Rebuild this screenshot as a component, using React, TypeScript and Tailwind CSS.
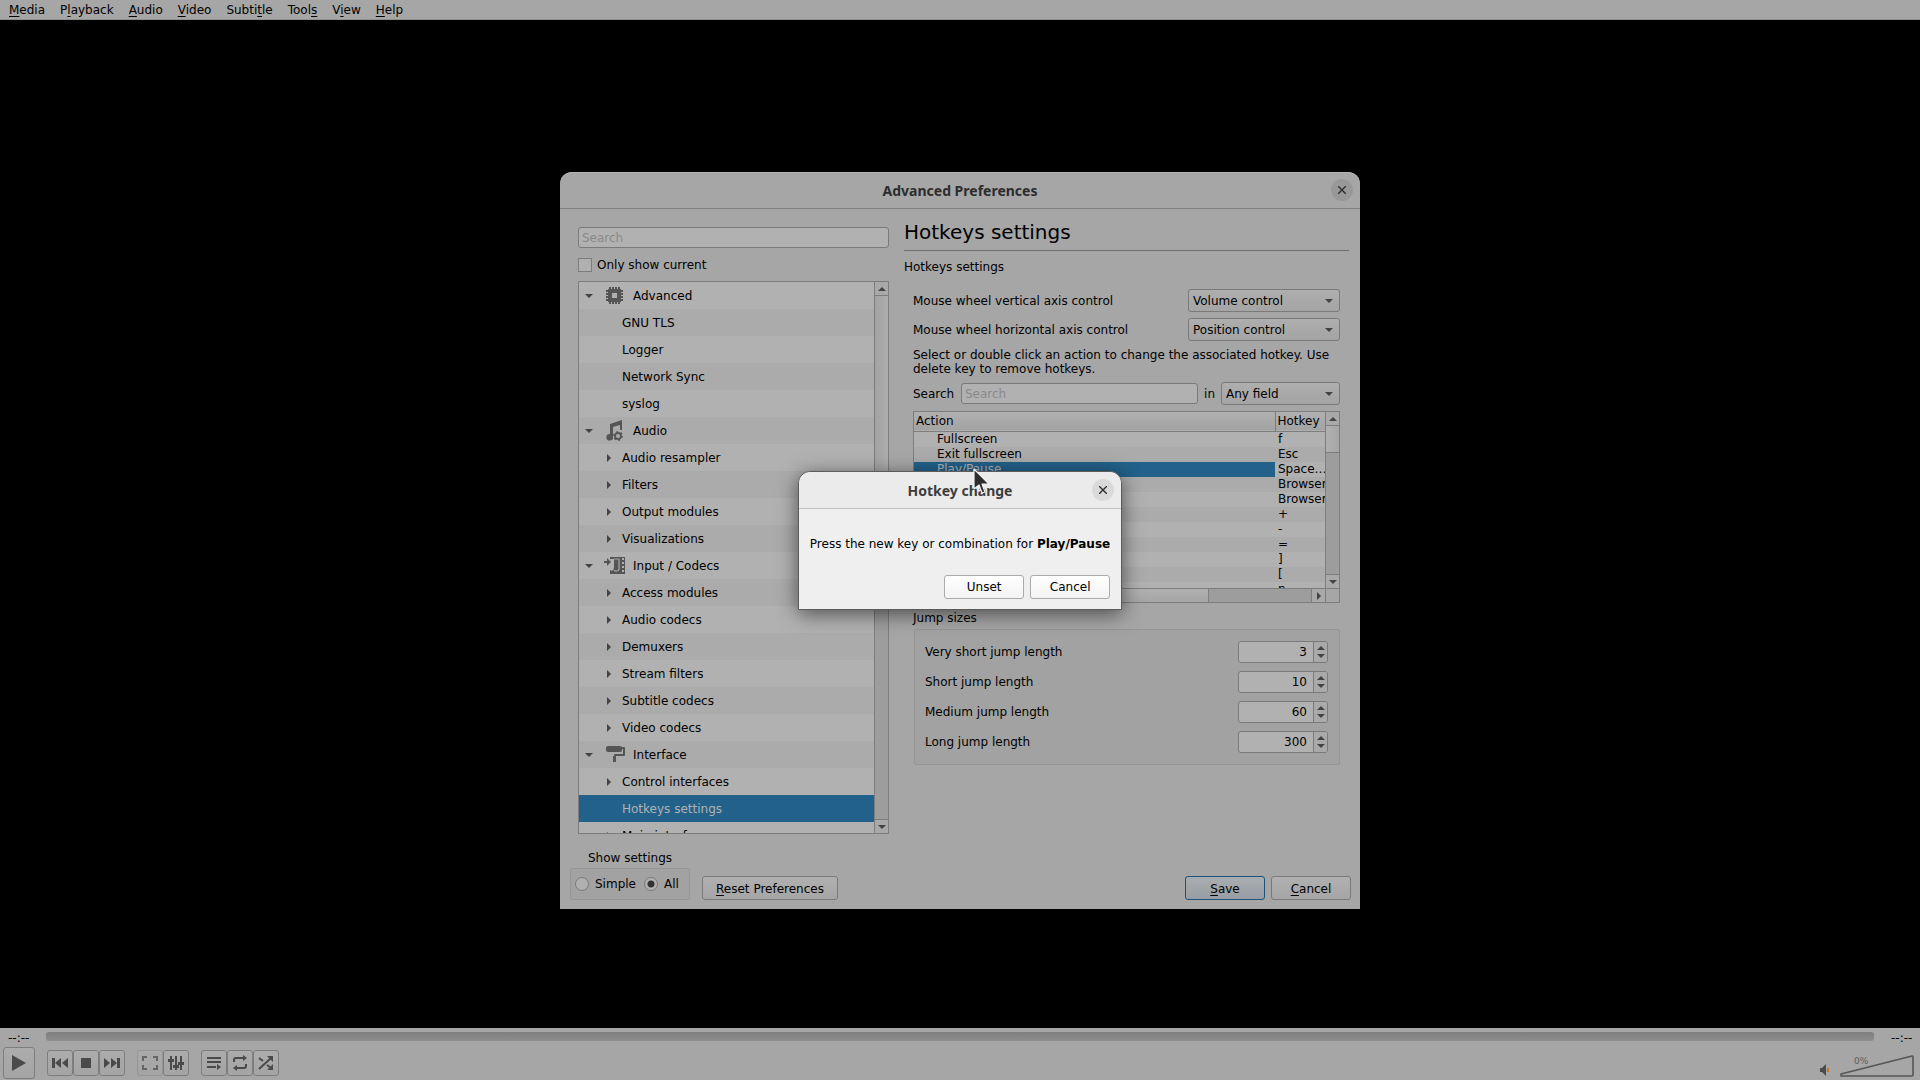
import { useState } from "react"
import type { ReactNode } from "react"

type TreeItem = { label: string; level: 0 | 1; closed?: boolean; icon?: ReactNode; selected?: boolean }

function ChipIcon() {
  return (
    <svg width="22" height="22" viewBox="0 0 22 22" fill="#555" className="shrink-0">
      <path d="M4 4h13v13H4z M8 8v5h5V8z" fillRule="evenodd" />
      <path d="M5 2h2v2H5z M8 2h2v2H8z M11 2h2v2h-2z M14 2h2v2h-2z M5 17h2v2H5z M8 17h2v2H8z M11 17h2v2h-2z M14 17h2v2h-2z" />
      <path d="M2 5h2v2H2z M2 8h2v2H2z M2 11h2v2H2z M2 14h2v2H2z M17 5h2v2h-2z M17 8h2v2h-2z M17 11h2v2h-2z M17 14h2v2h-2z" />
    </svg>
  )
}

function NoteIcon() {
  return (
    <svg width="22" height="22" viewBox="0 0 22 22" className="shrink-0 overflow-visible">
      <path d="M6 4L18 0v10h-2V5L9 7v10a3.3 3.3 0 1 1-3-3z" fill="#555" />
      <circle cx="14" cy="16" r="3" fill="none" stroke="#555" strokeWidth="1.8" />
      <circle cx="14" cy="16" r="4.2" fill="none" stroke="#555" strokeWidth="1.4" strokeDasharray="1.8 2.6" />
    </svg>
  )
}

function CodecIcon() {
  return (
    <svg width="22" height="22" viewBox="0 0 22 22" className="shrink-0 overflow-visible">
      <path d="M0 6h3V3l4 4-4 4V8H0z" fill="#555" />
      <path d="M6 2h15v17H6v-4c3 2 4-1 4-3V4H6z" fill="#555" />
      <path d="M10 4h5v10c0 2-4 3-5 1" fill="none" stroke="#a9a9a9" strokeWidth="1.2" />
      <path d="M18 3h2v2h-2z M18 7h2v2h-2z M18 11h2v2h-2z M18 15h2v2h-2z" fill="#b0b0b0" />
    </svg>
  )
}

function RollerIcon() {
  return (
    <svg width="22" height="22" viewBox="0 0 22 22" className="shrink-0 overflow-visible">
      <rect x="2" y="2" width="16" height="6" rx="2" fill="#555" />
      <path d="M17 4h3v7h-9v6" fill="none" stroke="#555" strokeWidth="2" strokeLinejoin="round" strokeLinecap="round" />
      <path d="M9 12h3v6H9z" fill="#555" />
    </svg>
  )
}

const tree: TreeItem[] = [
  { label: "Advanced", level: 0, icon: <ChipIcon /> },
  { label: "GNU TLS", level: 1 },
  { label: "Logger", level: 1 },
  { label: "Network Sync", level: 1 },
  { label: "syslog", level: 1 },
  { label: "Audio", level: 0, icon: <NoteIcon /> },
  { label: "Audio resampler", level: 1, closed: true },
  { label: "Filters", level: 1, closed: true },
  { label: "Output modules", level: 1, closed: true },
  { label: "Visualizations", level: 1, closed: true },
  { label: "Input / Codecs", level: 0, icon: <CodecIcon /> },
  { label: "Access modules", level: 1, closed: true },
  { label: "Audio codecs", level: 1, closed: true },
  { label: "Demuxers", level: 1, closed: true },
  { label: "Stream filters", level: 1, closed: true },
  { label: "Subtitle codecs", level: 1, closed: true },
  { label: "Video codecs", level: 1, closed: true },
  { label: "Interface", level: 0, icon: <RollerIcon /> },
  { label: "Control interfaces", level: 1, closed: true },
  { label: "Hotkeys settings", level: 1, selected: true },
  { label: "Main interfaces", level: 1, closed: true },
]

const hotkeys = [
  ["Fullscreen", "f"],
  ["Exit fullscreen", "Esc"],
  ["Play/Pause", "Space…"],
  ["Pause only", "Browser"],
  ["Play only", "Browser"],
  ["Faster", "+"],
  ["Slower", "-"],
  ["Normal rate", "="],
  ["Faster (fine)", "]"],
  ["Slower (fine)", "["],
  ["Next", "n"],
]

const jumps = [
  { id: "very-short", label: "Very short jump length", value: 3 },
  { id: "short", label: "Short jump length", value: 10 },
  { id: "medium", label: "Medium jump length", value: 60 },
  { id: "long", label: "Long jump length", value: 300 },
]

// [before, mnemonic, after]
const menus = [
  ["", "M", "edia"],
  ["P", "l", "ayback"],
  ["", "A", "udio"],
  ["", "V", "ideo"],
  ["Subti", "t", "le"],
  ["Tool", "s", ""],
  ["V", "i", "ew"],
  ["", "H", "elp"],
]

function Mnemonic({ parts }: { parts: string[] }) {
  return (
    <span>
      {parts[0]}
      <span className="underline underline-offset-2">{parts[1]}</span>
      {parts[2]}
    </span>
  )
}

function Arrow({ dir }: { dir: "up" | "down" | "right" }) {
  const d = { up: "M0 6L4 2L8 6z", down: "M0 2L4 6L8 2z", right: "M2 0L6 4L2 8z" }[dir]
  return (
    <svg width="8" height="8" viewBox="0 0 8 8" fill="#434343" className="shrink-0">
      <path d={d} />
    </svg>
  )
}

function CloseButton({ className }: { className: string }) {
  return (
    <button aria-label="Close" className={`flex size-[22px] items-center justify-center rounded-full ${className}`}>
      <svg width="8" height="8" viewBox="0 0 8 8" stroke="#303030" strokeWidth="1.4">
        <path d="M0 0L8 8M8 0L0 8" />
      </svg>
    </button>
  )
}

function TitleBar({ title, className, closeClass }: { title: string; className: string; closeClass: string }) {
  return (
    <div className={`grid h-[37px] grid-cols-[1fr_auto_1fr] items-center border-b px-[7px] ${className}`}>
      <span />
      <h1 className="pt-0.5 font-['Noto_Sans',sans-serif] text-sm font-bold">{title}</h1>
      <div className="flex justify-end">
        <CloseButton className={closeClass} />
      </div>
    </div>
  )
}

function Select({ id, value, className }: { id: string; value: string; className: string }) {
  return (
    <div className={`relative h-[23px] ${className}`}>
      <select
        id={id}
        className="h-full w-full appearance-none rounded-[3px] border border-[#7a7a7a] bg-linear-to-b from-[#aeaeae] to-[#a4a4a4] pl-1 text-xs"
      >
        <option>{value}</option>
      </select>
      <span className="pointer-events-none absolute inset-y-0 right-[7px] flex items-center">
        <Arrow dir="down" />
      </span>
    </div>
  )
}

const pushButton = "h-6 rounded-[3px] border text-center"
const greyButton = "border-[#797979] bg-linear-to-b from-[#b0b0b0] to-[#a5a5a5]"

function Tree() {
  return (
    <div className="mt-2 flex h-[553px] border border-[#7d7d7d]">
      <ul className="min-w-0 flex-1 overflow-hidden bg-[#b1b1b1]">
        {tree.map((item) => (
          <li
            key={item.label}
            className={`flex h-[27px] items-center ${item.selected ? "bg-[#22618a] text-[#b2b2b2]" : "even:bg-[#ababab]"}`}
          >
            {item.level === 0 ? (
              <>
                <span className="flex w-[25px] pl-1.5">
                  <Arrow dir="down" />
                </span>
                {item.icon}
                <span className="pl-[7px]">{item.label}</span>
              </>
            ) : (
              <>
                <span className="flex w-[43px] pl-[26px]">{item.closed && <Arrow dir="right" />}</span>
                <span>{item.label}</span>
              </>
            )}
          </li>
        ))}
      </ul>
      <div className="flex w-[14px] flex-col border-l border-[#7d7d7d] bg-[#9d9d9d]">
        <span className="flex h-[14px] items-center justify-center border-b border-[#7d7d7d] bg-[#a9a9a9]">
          <Arrow dir="up" />
        </span>
        <span className="h-60 border-b border-[#7d7d7d] bg-linear-to-r from-[#a3a3a3] to-[#adadad]" />
        <span className="mt-auto flex h-[14px] items-center justify-center border-t border-[#7d7d7d] bg-[#a9a9a9]">
          <Arrow dir="down" />
        </span>
      </div>
    </div>
  )
}

function HotkeyTable() {
  return (
    <div className="mt-1.5 border border-[#7d7d7d]">
      <div className="flex h-[176px]">
        <div className="min-w-0 flex-1 overflow-hidden bg-[#b1b1b1]">
          <table className="w-full table-fixed border-collapse text-left">
            <thead>
              <tr className="h-[19px] border-b border-[#7d7d7d] bg-linear-to-b from-[#b0b0b0] to-[#a3a3a3] leading-[17px]">
                <th className="pt-px pl-0.5 font-normal">Action</th>
                <th className="w-[50px] border-l border-[#7d7d7d] pt-px pl-0.5 font-normal">Hotkey</th>
              </tr>
            </thead>
            <tbody>
              {hotkeys.map(([action, key], i) => (
                <tr key={action} className="h-[15px] leading-[15px] even:bg-[#ababab]">
                  <td className={i === 2 ? "bg-[#22618a] pl-[23px] text-[#b2b2b2]" : "pl-[23px]"}>{action}</td>
                  <td className="overflow-hidden pl-[3px] whitespace-nowrap">{key}</td>
                </tr>
              ))}
            </tbody>
          </table>
        </div>
        <div className="flex w-[14px] flex-col border-l border-[#7d7d7d] bg-[#9d9d9d]">
          <span className="flex h-[14px] items-center justify-center border-b border-[#7d7d7d] bg-[#a9a9a9]">
            <Arrow dir="up" />
          </span>
          <span className="h-[27px] border-b border-[#7d7d7d] bg-linear-to-r from-[#b0b0b0] to-[#a6a6a6]" />
          <span className="mt-auto flex h-[14px] items-center justify-center border-t border-[#7d7d7d] bg-[#a9a9a9]">
            <Arrow dir="down" />
          </span>
        </div>
      </div>
      <div className="flex h-[14px] border-t border-[#7d7d7d] bg-[#9d9d9d]">
        <span className="w-[14px] border-r border-[#7d7d7d] bg-[#a9a9a9]" />
        <span className="w-[281px] border-r border-[#7d7d7d] bg-linear-to-b from-[#b0b0b0] to-[#a5a5a5]" />
        <span className="ml-auto flex w-[14px] items-center justify-center border-l border-[#7d7d7d] bg-[#a9a9a9]">
          <Arrow dir="right" />
        </span>
        <span className="w-[14px] border-l border-[#7d7d7d] bg-[#a6a6a6]" />
      </div>
    </div>
  )
}

function JumpSizes() {
  return (
    <fieldset className="mt-2">
      <legend className="leading-[14px]">Jump sizes</legend>
      <div className="mt-1 ml-px flex flex-col gap-2 rounded-xs border border-[#959595] bg-[#a2a2a2] py-[11px] pr-[11px] pl-2.5">
        {jumps.map((jump) => (
          <div key={jump.id} className="flex h-[22px] items-center justify-between">
            <label htmlFor={jump.id}>{jump.label}</label>
            <div className="flex h-[22px] w-[90px] rounded-[3px] border border-[#7a7a7a] bg-[#b1b1b1]">
              <input id={jump.id} defaultValue={jump.value} className="w-full min-w-0 flex-1 pr-1.5 text-right outline-none" />
              <div className="flex w-[14px] flex-col items-center justify-center rounded-r-xs border-l border-[#7a7a7a] bg-[#a9a9a9]">
                <Arrow dir="up" />
                <Arrow dir="down" />
              </div>
            </div>
          </div>
        ))}
      </div>
    </fieldset>
  )
}

function Radio({ label, checked, onChange }: { label: string; checked: boolean; onChange: () => void }) {
  return (
    <label className="flex items-center gap-1.5">
      <input
        type="radio"
        name="show"
        checked={checked}
        onChange={onChange}
        className="size-[14px] appearance-none rounded-full border border-[#7a7a7a] bg-[#b0b0b0] checked:bg-[radial-gradient(circle,#333_3px,#b0b0b0_4px)]"
      />
      {label}
    </label>
  )
}

function Preferences() {
  const [mode, setMode] = useState("All")
  return (
    <section className="w-[800px] overflow-hidden rounded-t-xl bg-[#a6a6a6] shadow-[inset_0_1px_0_#b4b4b4]">
      <TitleBar title="Advanced Preferences" className="border-[#808080] text-[#2d2d2d]" closeClass="bg-[#989898]" />
      <div className="flex gap-[15px] pr-[11px] pl-[18px]">
        <div className="w-[311px] shrink-0 pt-[18px]">
          <input
            aria-label="Search settings"
            placeholder="Search"
            className="block h-[21px] w-full rounded-[3px] border border-[#7a7a7a] bg-[#b1b1b1] px-[3px] outline-none placeholder:text-[#8a8a8a]"
          />
          <label className="mt-[9px] flex h-4 items-center gap-[5px]">
            <input type="checkbox" className="size-[14px] appearance-none border border-[#7d7d7d] bg-[#b0b0b0]" />
            Only show current
          </label>
          <Tree />
        </div>
        <div className="min-w-0 flex-1">
          <h2 className="border-b border-[#6e6e6e] pt-[11px] pb-1.5 text-xl leading-6">Hotkeys settings</h2>
          <p className="mt-[9px] leading-[14px]">Hotkeys settings</p>
          <div className="mt-[15px] px-[9px]">
            <div className="flex items-center justify-between">
              <label htmlFor="vertical">Mouse wheel vertical axis control</label>
              <Select id="vertical" value="Volume control" className="w-[152px]" />
            </div>
            <div className="mt-1.5 flex items-center justify-between">
              <label htmlFor="horizontal">Mouse wheel horizontal axis control</label>
              <Select id="horizontal" value="Position control" className="w-[152px]" />
            </div>
            <p className="mt-[7px] leading-[14px]">
              Select or double click an action to change the associated hotkey. Use delete key to remove hotkeys.
            </p>
            <div className="mt-1.5 flex items-center">
              <label htmlFor="filter" className="w-12">Search</label>
              <input
                id="filter"
                placeholder="Search"
                className="h-[21px] min-w-0 flex-1 rounded-[3px] border border-[#7a7a7a] bg-[#b1b1b1] px-[3px] outline-none placeholder:text-[#8a8a8a]"
              />
              <label htmlFor="field" className="px-1.5">in</label>
              <Select id="field" value="Any field" className="w-[119px]" />
            </div>
            <HotkeyTable />
            <JumpSizes />
          </div>
        </div>
      </div>
      <div className="flex items-end px-[9px] pt-4 pb-[9px]">
        <fieldset className="pl-px">
          <legend className="pl-[18px] leading-4">Show settings</legend>
          <div className="mt-0.5 flex h-8 w-[120px] items-center gap-2 rounded-xs border border-[#959595] bg-[#a2a2a2] px-1">
            <Radio label="Simple" checked={mode === "Simple"} onChange={() => setMode("Simple")} />
            <Radio label="All" checked={mode === "All"} onChange={() => setMode("All")} />
          </div>
        </fieldset>
        <button className={`ml-3 w-[136px] pt-px ${pushButton} ${greyButton}`}>
          <Mnemonic parts={["", "R", "eset Preferences"]} />
        </button>
        <div className="ml-auto flex gap-1.5">
          <button className={`w-20 border-[#1b5379] bg-linear-to-b from-[#aaadb0] to-[#979da3] pt-px ${pushButton}`}>
            <Mnemonic parts={["", "S", "ave"]} />
          </button>
          <button className={`w-20 pt-px ${pushButton} ${greyButton}`}>
            <Mnemonic parts={["", "C", "ancel"]} />
          </button>
        </div>
      </div>
    </section>
  )
}

function HotkeyDialog() {
  const button = `w-20 border-[#ababab] bg-linear-to-b from-white to-[#f3f3f3] ${pushButton}`
  return (
    <section
      role="dialog"
      aria-label="Hotkey change"
      className="relative rounded-t-xl border border-[#5c5c5c] bg-[#efefef] shadow-[0_4px_20px_rgba(0,0,0,0.55)]"
    >
      <TitleBar
        title="Hotkey change"
        className="rounded-t-xl border-[#bfbfbf] bg-[#ebebeb] text-[#3d3d3d]"
        closeClass="bg-[#dadada]"
      />
      <div className="px-[11px] pt-6 pb-2.5">
        <p className="leading-[22px]">
          Press the new key or combination for <b>Play/Pause</b>
        </p>
        <div className="mt-5 flex justify-end gap-1.5">
          <button className={button}>Unset</button>
          <button className={button}>Cancel</button>
        </div>
      </div>
      {/* Mouse pointer */}
      <svg width="18" height="27" viewBox="0 0 18 27" className="absolute -top-1 left-[174px]">
        <path d="M1 1V21L6 17L9 25L12 24L9 16H16z" fill="#2d2d2d" stroke="#f2f2f2" strokeWidth="1.2" strokeLinejoin="round" />
      </svg>
    </section>
  )
}

function ToolButton({ label, faded, children }: { label: string; faded?: boolean; children: ReactNode }) {
  return (
    <button
      aria-label={label}
      className={`flex size-[26px] items-center justify-center rounded-[3px] border bg-linear-to-b from-[#acacac] to-[#a4a4a4] ${faded ? "border-[#909090] opacity-70" : "border-[#7d7d7d]"}`}
    >
      <svg width="16" height="16" viewBox="0 0 16 16" fill="#4a4a4a" stroke="none">
        {children}
      </svg>
    </button>
  )
}

function PlayerControls() {
  return (
    <footer className="h-[52px] bg-[#a6a6a6]">
      <div className="flex h-[19px] items-center">
        <span className="w-[46px] pl-2">--:--</span>
        <div className="mb-1.5 h-[9px] flex-1 self-end rounded-[3px] bg-linear-to-b from-[#7e7e7e] to-[#8e8e8e]" />
        <span className="w-[46px] pl-[17px]">--:--</span>
      </div>
      <div className="flex h-8 items-center pr-[6px] pl-[3px]">
        <button
          aria-label="Play"
          className="flex size-8 items-center justify-center rounded-[3px] border border-[#7d7d7d] bg-linear-to-b from-[#acacac] to-[#a4a4a4]"
        >
          <svg width="16" height="18" viewBox="0 0 16 18" fill="#4a4a4a">
            <path d="M1 1L15 9L1 17z" />
          </svg>
        </button>
        <div className="ml-3 flex">
          <ToolButton label="Previous">
            <path d="M0 3h3v10H0z M9 3v10L3 8z M16 3v10l-6-5z" />
          </ToolButton>
          <ToolButton label="Stop">
            <path d="M3 3h10v10H3z" />
          </ToolButton>
          <ToolButton label="Next">
            <path d="M13 3h3v10h-3z M7 3v10l6-5z M0 3v10l6-5z" />
          </ToolButton>
        </div>
        <div className="ml-3 flex">
          <ToolButton label="Fullscreen" faded>
            <path d="M0 1h5v2H2v3H0z M11 1h5v5h-2V3h-3z M0 10h2v3h3v2H0z M14 10h2v5h-5v-2h3z" />
          </ToolButton>
          <ToolButton label="Extended settings">
            <path d="M2 1h2v14H2z M7 1h2v14H7z M12 1h2v14h-2z M0 4h6v3H0z M5 10h6v3H5z M10 7h6v3h-6z" />
          </ToolButton>
        </div>
        <div className="ml-3 flex">
          <ToolButton label="Playlist">
            <path d="M1 2h14v2H1z M1 6h14v2H1z M1 11h9v2H1z M11 9l4 3-4 3z" />
          </ToolButton>
          <ToolButton label="Loop">
            <path d="M2 7V5q0-2 2-2h8 M14 9v2q0 2-2 2H4" fill="none" stroke="#4a4a4a" strokeWidth="2" />
            <path d="M11 0l4 3-4 3z M5 10l-4 3 4 3z" />
          </ToolButton>
          <ToolButton label="Random">
            <path d="M1 14L13 3 M1 3l4 3 M9 10l4 3" fill="none" stroke="#4a4a4a" strokeWidth="2" />
            <path d="M9 1h6v6z M15 9v6H9z" />
          </ToolButton>
        </div>
        <svg width="95" height="30" viewBox="0 0 95 30" className="ml-auto">
          <path d="M1 20h2l4-4v12l-4-4H1z" fill="#4a4a4a" />
          <path d="M9 20v4" stroke="#c8690f" strokeWidth="1.6" />
          <path d="M22 28V26L93 8q1 0 1 1V27q0 1-1 1H22z" fill="none" stroke="#555" strokeWidth="1.6" strokeLinejoin="round" />
          <text x="35" y="16" fontSize="9" fill="#606060" fontFamily="DejaVu Sans, sans-serif">0%</text>
        </svg>
      </div>
    </footer>
  )
}

export default function App() {
  return (
    <div className="relative flex min-h-screen flex-col bg-black font-['DejaVu_Sans',sans-serif] text-xs text-black">
      <nav className="flex h-5 items-center gap-[15px] border-b border-[#8d918f] bg-[#a6a6a6] pl-[9px]">
        {menus.map((parts) => (
          <button key={parts.join("")} className="leading-[18px]">
            <Mnemonic parts={parts} />
          </button>
        ))}
      </nav>
      <main className="flex-1" />
      <PlayerControls />
      <div className="absolute inset-0 flex items-center justify-center pt-px">
        <Preferences />
      </div>
      <div className="absolute inset-0 flex items-center justify-center pt-px">
        <HotkeyDialog />
      </div>
    </div>
  )
}
